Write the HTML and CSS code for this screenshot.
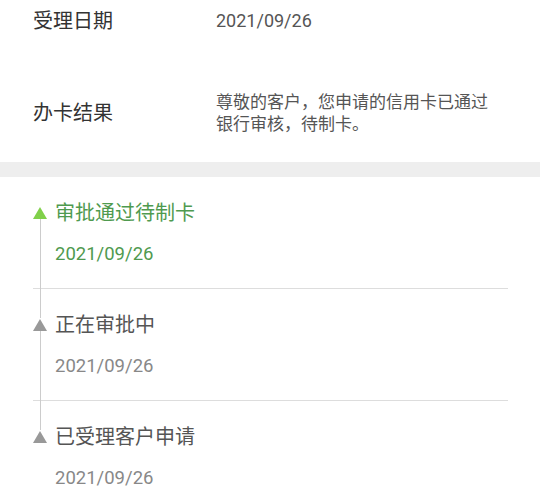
FILE: index.html
```html
<!DOCTYPE html>
<html lang="zh-CN">

<head>
    <meta charset="UTF-8">
    <meta name="viewport" content="width=device-width, initial-scale=1.0">
    <title>办卡进度</title>
    <link rel="stylesheet" href="styles.css">
</head>

<body>
    <div class="info">
        <div class="row first">
            <div class="label">受理日期</div>
            <div class="value num">2021/09/26</div>
        </div>
        <div class="row">
            <div class="label">办卡结果</div>
            <div class="value">尊敬的客户，您申请的信用卡已通过银行审核，待制卡。</div>
        </div>
    </div>
    <div class="gap"></div>
    <ul class="timeline">
        <li class="item done">
            <div class="title"><span class="mark"></span>审批通过待制卡</div>
            <div class="date">2021/09/26</div>
        </li>
        <li class="item">
            <div class="title"><span class="mark"></span>正在审批中</div>
            <div class="date">2021/09/26</div>
        </li>
        <li class="item">
            <div class="title"><span class="mark"></span>已受理客户申请</div>
            <div class="date">2021/09/26</div>
        </li>
    </ul>
</body>

</html>
```

FILE: styles.css
```css
* {
    padding: 0px;
    margin: 0px;
    list-style: none;
}

body {
    background-color: #fff;
    font-family: Roboto, "Noto Sans CJK SC", sans-serif;
}

.info .row {
    display: flex;
    align-items: center;
    padding: 27px 0px;
}

.info .row.first {
    padding: 8px 0px 30px;
}

.info .label {
    width: 183px;
    padding-left: 33px;
    font-size: 20px;
    line-height: 26px;
    color: #333;
}

.info .value {
    width: 272px;
    font-family: Roboto, "Noto Sans CJK TC", sans-serif;
    font-size: 17px;
    line-height: 22px;
    color: #555;
}

.info .value.num {
    font-size: 18px;
}

.gap {
    height: 15px;
    background-color: #eee;
}

.timeline {
    padding: 0px 32px 0px 33px;
}

.timeline .item {
    position: relative;
    padding: 22px 0px 22px 22px;
    border-bottom: 1px solid #ddd;
}

.timeline .item:last-child {
    border-bottom: none;
}

/* 竖线连到下一个节点 */
.timeline .item::before {
    content: '';
    position: absolute;
    left: 7px;
    top: 42px;
    bottom: -30px;
    width: 1px;
    background-color: #ccc;
}

.timeline .item:last-child::before {
    display: none;
}

.timeline .title {
    position: relative;
    font-size: 20px;
    line-height: 28px;
    color: #555;
}

.timeline .mark {
    position: absolute;
    left: -22px;
    top: 8px;
    width: 0px;
    height: 0px;
    border-left: 7px solid transparent;
    border-right: 7px solid transparent;
    border-bottom: 12px solid #999;
}

.timeline .date {
    margin-top: 15px;
    font-size: 18.5px;
    line-height: 24px;
    color: #888;
}

.timeline .done .title,
.timeline .done .date {
    color: #4f9a4f;
}

.timeline .done .mark {
    border-bottom-color: #80d04a;
}
```
